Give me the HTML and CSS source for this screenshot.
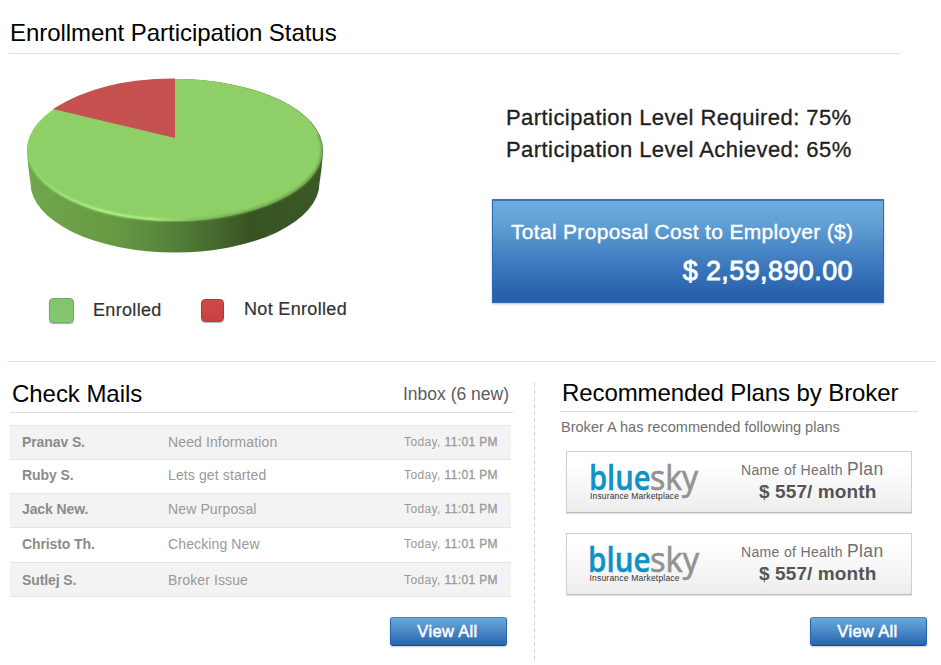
FILE: index.html
```html
<!DOCTYPE html>
<html lang="en">
<head>
<meta charset="utf-8">
<title>Enrollment Dashboard</title>
<link rel="stylesheet" href="styles.css">
</head>
<body>
<section class="status">
  <h2 class="status-title">Enrollment Participation Status</h2>
  <div class="status-body">
    <div class="chart">
      <svg class="pie" width="310" height="190" viewBox="20 70 310 190">
        <defs>
          <linearGradient id="side" x1="0" x2="1" y1="0" y2="0">
            <stop offset="0" stop-color="#6fa74c"/>
            <stop offset=".3" stop-color="#679943"/>
            <stop offset=".5" stop-color="#54803a"/>
            <stop offset=".63" stop-color="#456a2e"/>
            <stop offset=".76" stop-color="#385322"/>
            <stop offset="1" stop-color="#3b5826"/>
          </linearGradient>
          <linearGradient id="rim" x1="0" x2="1" y1="0" y2="0">
            <stop offset="0" stop-color="#8bd464"/>
            <stop offset=".25" stop-color="#b8ff8e"/>
            <stop offset=".42" stop-color="#b0fa85"/>
            <stop offset=".56" stop-color="#80bd59"/>
            <stop offset=".75" stop-color="#6da04a"/>
            <stop offset="1" stop-color="#6c9f49"/>
          </linearGradient>
          <filter id="soft" x="-5%" y="-5%" width="110%" height="110%"><feGaussianBlur stdDeviation=".8"/></filter>
          <clipPath id="solid"><path d="M27 150A148 71 0 0 1 323 150Q322 168 319.500 183A144.500 69.500 0 0 1 30.500 183Q28 168 27 150Z"/></clipPath>
        </defs>
        <path fill="url(#side)" d="M27 150A148 71 0 0 1 323 150Q322 168 319.500 183A144.500 69.500 0 0 1 30.500 183Q28 168 27 150Z"/>
        <ellipse cx="175" cy="150" rx="147.500" ry="71" fill="#8ecf67"/>
        <g clip-path="url(#solid)"><path d="M53 109.500C36 121 28 135 28 150A147 70 0 0 0 322 150C322 144 321 139 318 134" fill="none" stroke="url(#rim)" stroke-width="2.200" filter="url(#soft)"/></g>
        <path d="M175 138 53 109Q102 78 175 78.500Z" fill="#c55151"/>
      </svg>
      <div class="legend">
        <span class="swatch enrolled"></span><span class="label first">Enrolled</span>
        <span class="swatch missing"></span><span class="label">Not Enrolled</span>
      </div>
    </div>
    <div class="summary">
      <p class="level">Participation Level Required: 75%</p>
      <p class="level">Participation Level Achieved: 65%</p>
      <div class="cost">
        <div class="cost-label">Total Proposal Cost to Employer ($)</div>
        <div class="cost-value">$ 2,59,890.00</div>
      </div>
    </div>
  </div>
</section>
<main class="lower">
  <section class="mails">
    <header class="mail-head"><h2>Check Mails</h2><span class="inbox">Inbox (6 new)</span></header>
    <div class="mail-list">
      <div class="mail"><b>Pranav S.</b><span class="subject">Need Information</span><span class="time">Today, <i>11:01 PM</i></span></div>
      <div class="mail raised"><b>Ruby S.</b><span class="subject">Lets get started</span><span class="time">Today, <i>11:01 PM</i></span></div>
      <div class="mail raised"><b>Jack New.</b><span class="subject">New Purposal</span><span class="time">Today, <i>11:01 PM</i></span></div>
      <div class="mail tall"><b>Christo Th.</b><span class="subject">Checking New</span><span class="time">Today, <i>11:01 PM</i></span></div>
      <div class="mail last"><b>Sutlej S.</b><span class="subject">Broker Issue</span><span class="time">Today, <i>11:01 PM</i></span></div>
    </div>
    <a class="button">View All</a>
  </section>
  <svg class="separator" width="1" height="277"><path d="M.5 0V277" stroke="#cfcfcf" stroke-dasharray="4 3"/></svg>
  <section class="plans">
    <h2 class="plans-title">Recommended Plans by Broker</h2>
    <p class="intro">Broker A has recommended following plans</p>
    <div class="plan">
      <svg class="logo" width="114" height="44" viewBox="0 0 114 44">
        <text class="blue" x="-1" y="30" textLength="61.500" lengthAdjust="spacingAndGlyphs">blue</text>
        <text class="sky" x="60" y="30" textLength="48" lengthAdjust="spacingAndGlyphs">sky</text>
        <text class="tag" x="0" y="39" textLength="89">Insurance Marketplace</text>
      </svg>
      <div class="offer"><div class="plan-name">Name of Health <span>Plan</span></div><div class="price">$ 557/ month</div></div>
    </div>
    <div class="plan">
      <svg class="logo" width="114" height="44" viewBox="0 0 114 44">
        <text class="blue" x="-2" y="30" textLength="62.500" lengthAdjust="spacingAndGlyphs">blue</text>
        <text class="sky" x="60" y="30" textLength="49" lengthAdjust="spacingAndGlyphs">sky</text>
        <text class="tag" x="-.5" y="39" textLength="90">Insurance Marketplace</text>
      </svg>
      <div class="offer"><div class="plan-name">Name of Health <span>Plan</span></div><div class="price">$ 557/ month</div></div>
    </div>
    <a class="button">View All</a>
  </section>
</main>
</body>
</html>
```
FILE: styles.css
```css
* { box-sizing: border-box; }
body {
  margin: 0;
  width: 941px;
  height: 665px;
  overflow: hidden;
  background: #fff;
  font-family: "Liberation Sans", Arial, sans-serif;
  white-space: nowrap;
}
h2, p { margin: 0; }
h2 { font-size: 24px; font-weight: 400; line-height: 26px; letter-spacing: -.05px; color: #000; }

.status { height: 362px; margin: 0 5px 0 7px; padding-top: 20px; border-bottom: 1px solid #e4e4e4; }
.status-title { width: 890px; height: 34px; margin-left: 2px; padding-left: 1px; border-bottom: 1px solid #dedede; }
.status-body { display: flex; }
.chart { width: 485px; padding: 16px 0 0 13px; }
.pie { display: block; }
.legend { display: flex; align-items: flex-start; padding: 38px 0 0 29px; }
.swatch { width: 25px; height: 25px; border-radius: 4px; }
.enrolled { background: linear-gradient(#82c36c, #86c971); border: 1px solid #6fa96b; box-shadow: 0 1px 1px #aaa; }
.missing { width: 23px; height: 23px; margin-top: 1px; background: linear-gradient(#d04848, #c94242); border: 1px solid #a83a3a; box-shadow: 0 1px 1px #bbb; }
.label { margin-left: 20px; font-size: 18px; line-height: 20px; letter-spacing: .33px; color: #333; -webkit-text-stroke: .2px #333; margin-top: 1px; }
.label.first { width: 108px; margin: 2px 0 0 19px; }

.summary { width: 392px; padding-top: 48px; }
.level { margin-left: 14px; font-size: 22px; line-height: 32px; letter-spacing: .43px; color: #1e1e1e; -webkit-text-stroke: .3px #1e1e1e; }
.cost {
  height: 104px;
  margin-top: 33px;
  padding: 19px 30px 0 18px;
  color: #fff;
  background: linear-gradient(#6cabdd 2%, #62a2d6 20%, #3f7bbf 60%, #2862ad 92%);
  border: 1px solid #2c6bb5;
  border-width: 2px 1px 1px;
  border-top-color: #3076b9;
  box-shadow: 0 1px 2px #bbb;
}
.cost-label { height: 24px; font-size: 21px; line-height: 24px; letter-spacing: .31px; -webkit-text-stroke: .4px #fff; }
.cost-value { margin-top: 11px; font-size: 27px; line-height: 32px; letter-spacing: .4px; text-align: right; -webkit-text-stroke: .8px #fff; }

.lower { display: flex; height: 303px; }
.mails { width: 534px; padding: 19px 21px 0 10px; }
.mail-head { display: flex; justify-content: space-between; height: 32px; padding: 0 4px 0 2px; border-bottom: 1px solid #dcdcdc; }
.inbox { font-size: 17.500px; line-height: 27px; color: #5c5c5c; }
.mail-list { width: 501px; margin-top: 12px; border-bottom: 1px solid #e5e5e5; }
.mail { display: flex; height: 34px; padding-left: 12px; border-top: 1px solid #e5e5e5; line-height: 33px; color: #999; }
.mail:nth-child(odd) { background: #f3f3f3; }
.mail b { width: 146px; font-size: 14px; letter-spacing: -.1px; color: #8b8b8b; }
.subject { width: 236px; font-size: 14px; letter-spacing: .12px; }
.time { font-size: 12px; letter-spacing: .38px; }
.time i { font-style: normal; -webkit-text-stroke: .3px #999; }
.raised { line-height: 31px; }
.tall { height: 35px; line-height: 33px; }
.last { height: 34px; line-height: 35px; }
.button {
  display: block;
  width: 117px;
  height: 29px;
  margin: 20px 6px 0 auto;
  padding-right: 2px;
  border: 1px solid #2c65aa;
  border-color: #3c88b8 #2c65aa #174a94;
  border-radius: 3px;
  background: linear-gradient(#6baadc, #2964b0);
  box-shadow: 0 1px 2px #ccc;
  color: #fff;
  font-size: 16.500px;
  line-height: 26px;
  letter-spacing: .35px;
  text-align: center;
  -webkit-text-stroke: .5px #fff;
}
.separator { display: block; margin-top: 21px; }

.plans { width: 406px; padding: 18px 14px 0 25px; }
.plans-title { width: 358px; height: 32px; padding-left: 2px; letter-spacing: -.09px; border-bottom: 1px solid #dcdcdc; }
.intro { height: 39px; margin-left: 1px; padding-top: 6px; font-size: 14.500px; line-height: 18px; letter-spacing: .02px; color: #707070; }
.plan { display: flex; width: 346px; height: 62px; margin: 0 0 20px 6px; padding: 7px 0 0 23px; border: 1px solid #cfcfcf; border-bottom-color: #bdbdbd; background: linear-gradient(#fff 20%, #ededed); box-shadow: 0 1px 1px #e3e3e3; }
.logo { display: block; overflow: visible; margin-top: 1px; }
.logo text { font-family: "Open Sans", "Noto Sans", sans-serif; font-size: 34px; }
.logo .blue { fill: #0e91c4; font-weight: 600; stroke: #0e91c4; stroke-width: .4px; }
.logo .sky { fill: #929292; stroke: #929292; stroke-width: .7px; }
.logo .tag { font-family: "Liberation Sans", Arial, sans-serif; font-size: 8.500px; fill: #333; }
.offer { margin-left: 37px; color: #707070; }
.plan-name { font-size: 14px; line-height: 20px; letter-spacing: .33px; }
.plan-name span { font-size: 17.500px; }
.price { padding-left: 18px; font-size: 19px; font-weight: 700; line-height: 24px; letter-spacing: .1px; color: #555; }
.plans .button { margin: 22px 0 0 250px; }
```
